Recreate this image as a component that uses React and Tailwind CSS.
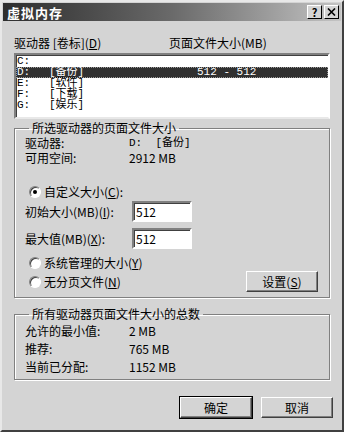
import React from 'react';

const FONT = { fontFamily: '"Noto Sans CJK SC", "Noto Sans", sans-serif' };
const LIST_FONT = { fontFamily: '"Liberation Mono", "Noto Sans CJK SC", monospace' };

const DRIVES = [
  { id: 'C:', label: '', size: '' },
  { id: 'D:', label: '[备份]', size: '512 - 512' },
  { id: 'E:', label: '[软件]', size: '' },
  { id: 'F:', label: '[下载]', size: '' },
  { id: 'G:', label: '[娱乐]', size: '' },
];

function Radio({ checked }) {
  return (
    <div className="shrink-0 w-[12px] h-[12px] rounded-full border border-t-[#808080] border-l-[#808080] border-r-white border-b-white bg-white flex items-center justify-center shadow-[inset_1px_1px_0_#404040]">
      {checked && <div className="w-[4px] h-[4px] rounded-full bg-black"></div>}
    </div>
  );
}

function TextBox({ value }) {
  return (
    <div className="shrink-0 w-[60px] h-[21px] bg-white border-2 border-t-[#808080] border-l-[#808080] border-r-white border-b-white shadow-[inset_1px_1px_0_#404040] flex items-center pl-[2px] text-[12px] leading-[12px]">
      {value}
    </div>
  );
}

function Button({ children, isDefault }) {
  return (
    <div className={`${isDefault ? 'border border-black' : 'border border-transparent'} shrink-0 w-[74px] h-[23px]`}>
      <div className="w-full h-full border border-t-white border-l-white border-r-[#404040] border-b-[#404040] shadow-[inset_-1px_-1px_0_#808080] flex items-center justify-center text-[12px] leading-[12px] whitespace-nowrap">
        {children}
      </div>
    </div>
  );
}

function Group({ title, className, children }) {
  return (
    <fieldset className={`w-[316px] border border-[#808080] shadow-[inset_1px_1px_0_#fff,1px_1px_0_#fff] px-[10px] ${className}`}>
      <legend className="ml-[4px] px-[3px] text-[12px] leading-[12px]">{title}</legend>
      {children}
    </fieldset>
  );
}

export default function App() {
  return (
    <div className="w-[344px] h-[432px] bg-[#d4d4d4] text-black border-2 border-t-[#e8e8e8] border-l-[#e8e8e8] border-r-[#404040] border-b-[#404040]" style={FONT}>
      <div className="h-[18px] mx-[1px] mt-[1px] bg-gradient-to-r from-[#2e2e2e] via-[#6a6a6a] to-[#c4c4c4] flex items-center justify-between pl-[4px] pr-[2px]">
        <span className="text-white font-bold text-[13px] leading-[13px] tracking-[1px]">虚拟内存</span>
        <div className="flex gap-[2px]">
          <div className="w-[15px] h-[14px] bg-[#d4d4d4] border border-t-white border-l-white border-r-black border-b-black flex items-center justify-center text-[11px] leading-[11px] font-bold">?</div>
          <div className="w-[15px] h-[14px] bg-[#d4d4d4] border border-t-white border-l-white border-r-black border-b-black flex items-center justify-center">
            <svg width="9" height="8" viewBox="0 0 9 8">
              <path d="M1 0.5 L8 7.5 M8 0.5 L1 7.5" stroke="#000" strokeWidth="1.6" />
            </svg>
          </div>
        </div>
      </div>

      <div className="pl-[12px]">
        <div className="mt-[16px] h-[12px] flex text-[12px] leading-[12px] whitespace-nowrap">
          <span className="w-[155px] shrink-0">驱动器 [卷标](<span className="underline">D</span>)</span>
          <span>页面文件大小(MB)</span>
        </div>

        <div
          className="mt-[4px] w-[316px] h-[66px] bg-white border-2 border-t-[#808080] border-l-[#808080] border-r-white border-b-[#e8e8e8] shadow-[inset_1px_1px_0_#404040] pt-[1px] text-[11px] leading-[11px] overflow-hidden"
          style={LIST_FONT}
        >
          {DRIVES.map((d) => (
            <div
              key={d.id}
              className={`h-[11px] flex whitespace-nowrap ${d.size ? 'bg-[#303030] text-white outline outline-1 outline-dotted outline-[#999] -outline-offset-1' : ''}`}
            >
              <span className="w-[33px] shrink-0 pl-[1px]">{d.id}</span>
              <span className="w-[148px] shrink-0">{d.label}</span>
              <span className="shrink-0">{d.size}</span>
            </div>
          ))}
        </div>

        <Group title="所选驱动器的页面文件大小" className="mt-[3px] pb-[4px]">
          <div className="text-[12px] leading-[12px] whitespace-nowrap">
            <div className="mt-[3px] flex h-[12px]">
              <span className="w-[104px] shrink-0">驱动器:</span>
              <span className="whitespace-pre text-[11px]" style={LIST_FONT}>D:  [备份]</span>
            </div>
            <div className="mt-[3px] flex h-[12px]">
              <span className="w-[104px] shrink-0">可用空间:</span>
              <span>2912 MB</span>
            </div>
            <div className="mt-[22px] flex items-center gap-[3px] h-[12px] pl-[4px]">
              <Radio checked />
              <span>自定义大小(<span className="underline">C</span>):</span>
            </div>
            <div className="mt-[3px] flex items-center h-[21px]">
              <span className="w-[107px] shrink-0">初始大小(MB)(<span className="underline">I</span>):</span>
              <TextBox value="512" />
            </div>
            <div className="mt-[6px] flex items-center h-[21px]">
              <span className="w-[107px] shrink-0">最大值(MB)(<span className="underline">X</span>):</span>
              <TextBox value="512" />
            </div>
            <div className="mt-[8px] flex items-center gap-[3px] h-[12px] pl-[4px]">
              <Radio />
              <span>系统管理的大小(<span className="underline">Y</span>)</span>
            </div>
            <div className="mt-[1px] flex items-center justify-between h-[23px]">
              <div className="flex items-center gap-[3px] pl-[4px]">
                <Radio />
                <span>无分页文件(<span className="underline">N</span>)</span>
              </div>
              <Button>设置(<span className="underline">S</span>)</Button>
            </div>
          </div>
        </Group>

        <Group title="所有驱动器页面文件大小的总数" className="mt-[10px] pb-[6px]">
          <div className="text-[12px] leading-[12px] whitespace-nowrap">
            <div className="mt-[5px] flex h-[12px]">
              <span className="w-[104px] shrink-0">允许的最小值:</span>
              <span>2 MB</span>
            </div>
            <div className="mt-[6px] flex h-[12px]">
              <span className="w-[104px] shrink-0">推荐:</span>
              <span>765 MB</span>
            </div>
            <div className="mt-[6px] flex h-[12px]">
              <span className="w-[104px] shrink-0">当前已分配:</span>
              <span>1152 MB</span>
            </div>
          </div>
        </Group>

        <div className="mt-[16px] w-[320px] flex justify-end gap-[7px]">
          <Button isDefault>确定</Button>
          <Button>取消</Button>
        </div>
      </div>
    </div>
  );
}
